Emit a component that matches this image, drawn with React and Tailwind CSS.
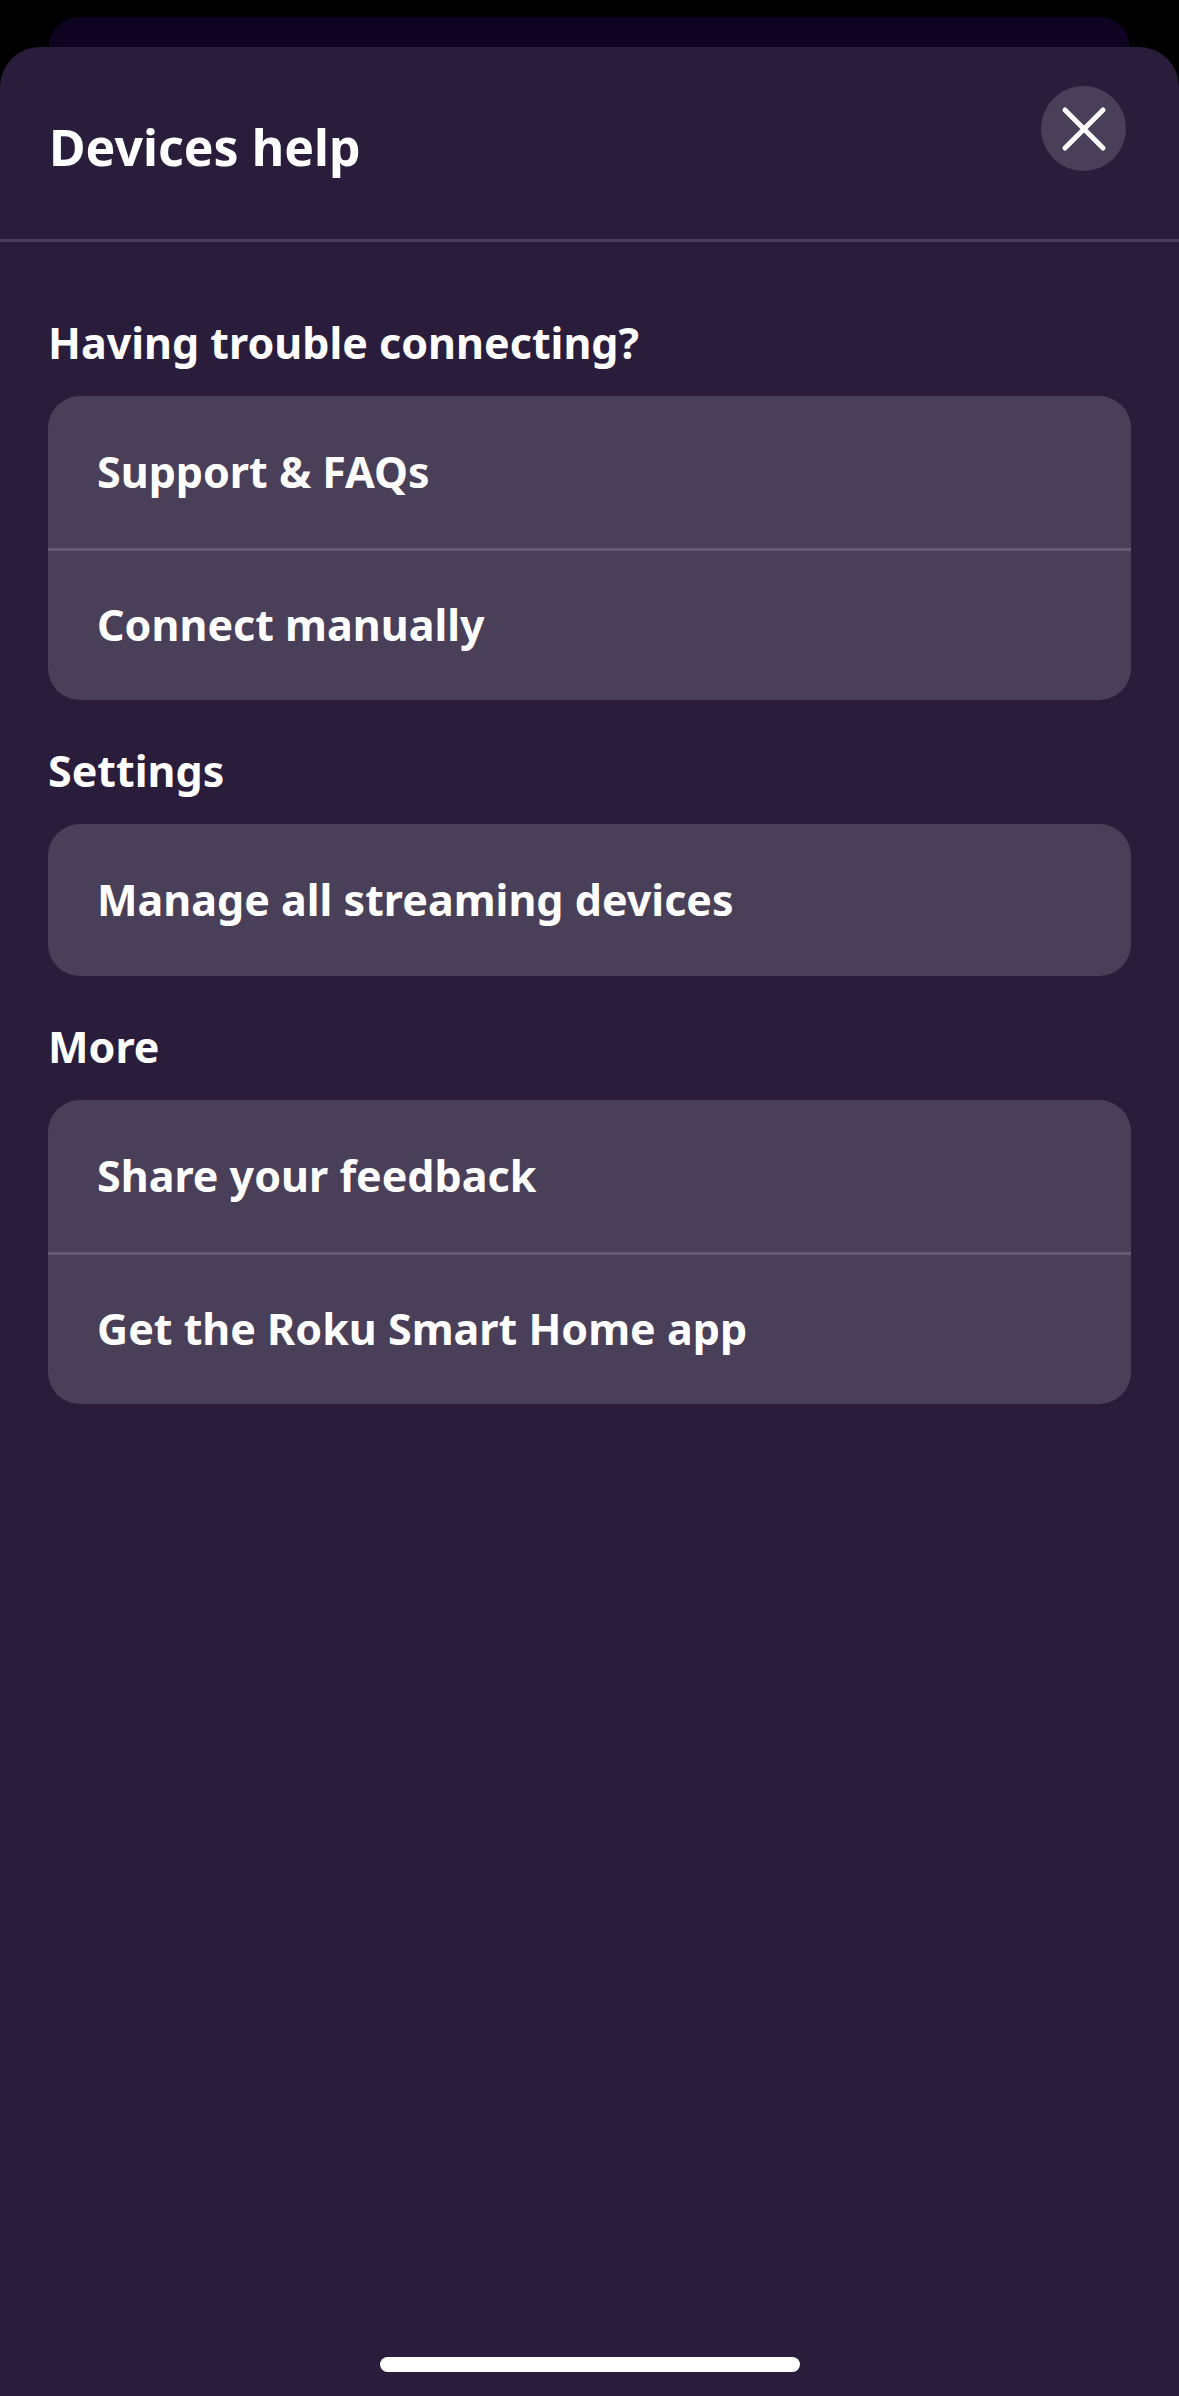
import React from "react";

const sections = [
  { title: "Having trouble connecting?", items: ["Support & FAQs", "Connect manually"] },
  { title: "Settings", items: ["Manage all streaming devices"] },
  { title: "More", items: ["Share your feedback", "Get the Roku Smart Home app"] },
];

export default function App() {
  return (
    <div className="h-[2396px] overflow-hidden bg-black pt-[17px] font-['Noto_Sans',sans-serif] text-white">
      <div className="mx-[49px] h-[30px] rounded-t-[30px] bg-[#0e0320]" />
      <div className="flex h-[2349px] flex-col rounded-t-[40px] bg-[#2a1d3c]">
        <div className="flex h-[195px] items-start justify-between border-b-[3px] border-[#4a3d63] pl-[49px] pr-[53px]">
          <h1 className="mt-[68px] text-[50px] leading-[64px] font-bold">Devices help</h1>
          <button className="mt-[39px] flex h-[85px] w-[85px] items-center justify-center rounded-full bg-[#4a3f58]">
            <svg width="46" height="46" viewBox="0 0 46 46" fill="none" stroke="white" strokeWidth="5" strokeLinecap="round">
              <path d="M4 4 L42 42 M42 4 L4 42" />
            </svg>
          </button>
        </div>
        <div className="flex flex-col gap-[42px] pt-[72px] pl-[48px] pr-[48px]">
          {sections.map((section) => (
            <section key={section.title}>
              <h2 className="mb-[24px] text-[43px] leading-[58px] font-bold">{section.title}</h2>
              <div className="overflow-hidden rounded-[32px] bg-[#4a3f58]">
                {section.items.map((item, i) => (
                  <div
                    key={item}
                    className={`flex h-[152px] items-center pl-[49px] text-[43px] font-bold ${i > 0 ? "border-t-[3px] border-[#645a73]" : ""}`}
                  >
                    {item}
                  </div>
                ))}
              </div>
            </section>
          ))}
        </div>
        <div className="mt-auto mb-[24px] h-[15px] w-[420px] self-center rounded-full bg-white" />
      </div>
    </div>
  );
}
